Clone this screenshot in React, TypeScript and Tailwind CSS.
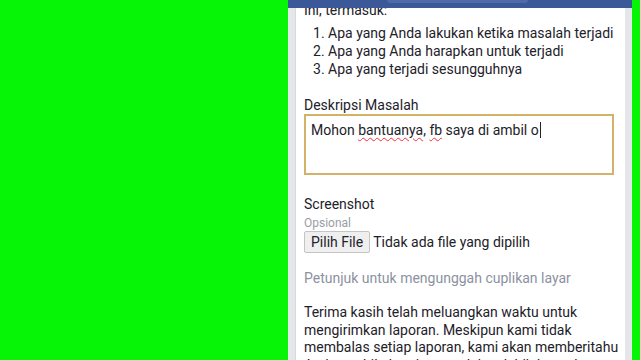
import React from "react"

const steps = [
  "Apa yang Anda lakukan ketika masalah terjadi",
  "Apa yang Anda harapkan untuk terjadi",
  "Apa yang terjadi sesungguhnya",
]

export default function App() {
  return (
    <div
      className="flex h-[360px] w-[640px] overflow-hidden bg-[#06f406] text-[14px] text-[#1d2129]"
      style={{ fontFamily: "Roboto, 'Liberation Sans', Arial, sans-serif" }}
    >
      <div className="w-[288px] shrink-0" />

      {/* Report panel */}
      <div className="flex w-[344px] shrink-0 flex-col bg-[#e4e6ea]">
        {/* Header bar */}
        <div className="relative h-[8px] shrink-0 bg-[#3b5998]">
          <div className="absolute left-[99px] top-0 h-[3px] w-[141px] rounded-b-[3px] bg-[#4f6aa6]" />
        </div>

        <div className="flex min-h-0 flex-1 pl-[7px] pr-[7px]">
          <div className="min-h-0 flex-1 overflow-hidden border-l border-[#d6d9de] bg-white pl-[8px] pr-[6px]">
            <div className="mt-[-7px] leading-[18px]">
              <p>Ini, termasuk:</p>

              <ol className="mt-[5px] pl-[9px]">
                {steps.map((s, i) => (
                  <li key={s} className="whitespace-nowrap">
                    {i + 1}. {s}
                  </li>
                ))}
              </ol>

              {/* Description */}
              <p className="mt-[18px]">Deskripsi Masalah</p>
              <div className="h-[61px] w-[310px] border-2 border-[#d3b26a] px-[5px] pt-[3px]">
                Mohon{" "}
                <span className="underline decoration-red-500 decoration-wavy decoration-1 underline-offset-2">
                  bantuanya
                </span>
                ,{" "}
                <span className="underline decoration-red-500 decoration-wavy decoration-1 underline-offset-2">
                  fb
                </span>{" "}
                saya di ambil o
                <span className="ml-[1px] inline-block h-[16px] w-[1px] translate-y-[3px] bg-[#1d2129]" />
              </div>

              {/* Screenshot */}
              <p className="mt-[20px]">Screenshot</p>
              <p className="mt-[3px] text-[12px] leading-[15px] text-[#9a9ea6]">Opsional</p>
              <div className="flex items-center gap-[3px]">
                <button className="h-[22px] rounded-[2px] border border-[#c4c4c4] bg-[#efefef] px-[6px] text-[14px] leading-[20px] text-[#1d2129]">
                  Pilih File
                </button>
                <span>Tidak ada file yang dipilih</span>
              </div>

              <p className="mt-[16px] text-[#8b92a0]">Petunjuk untuk mengunggah cuplikan layar</p>

              <p className="mt-[17px] whitespace-nowrap leading-[17.5px]">
                Terima kasih telah meluangkan waktu untuk
                <br />
                mengirimkan laporan. Meskipun kami tidak
                <br />
                membalas setiap laporan, kami akan memberitahu
                <br />
                Anda apabila kami memerlukan lebih banyak
              </p>
            </div>
          </div>
        </div>
      </div>

      <div className="flex-1" />
    </div>
  )
}
